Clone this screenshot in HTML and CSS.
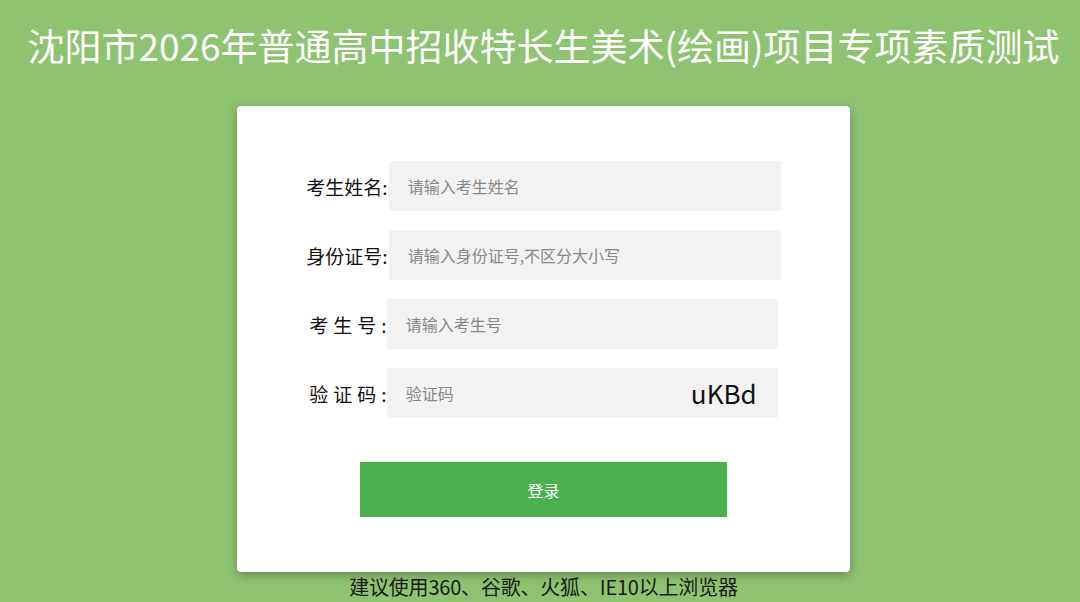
FILE: index.html
```html
<!DOCTYPE html>
<html lang="zh-CN">
<head>
    <meta charset="UTF-8">
    <meta name="viewport" content="width=device-width, initial-scale=1.0">
    <title>沈阳市2026年普通高中招收特长生美术(绘画)项目专项素质测试</title>
    <link rel="stylesheet" href="styles.css">
</head>

<body>
    <div class = 'page'>
        <h1 class = 'title'>沈阳市2026年普通高中招收特长生美术(绘画)项目专项素质测试</h1>

        <div class = 'login_box'>
            <form class = 'login_form' action = '#' method = 'POST'>
                <div class = 'form_row'>
                    <label class = 'row_label' for = 'name'>考生姓名:</label>
                    <input type = 'text' id = 'name' class = 'row_input' placeholder = '请输入考生姓名'>
                </div>
                <div class = 'form_row'>
                    <label class = 'row_label' for = 'idcard'>身份证号:</label>
                    <input type = 'text' id = 'idcard' class = 'row_input' placeholder = '请输入身份证号,不区分大小写'>
                </div>
                <div class = 'form_row'>
                    <label class = 'row_label spaced' for = 'examno'>考生号:</label>
                    <input type = 'text' id = 'examno' class = 'row_input narrow' placeholder = '请输入考生号'>
                </div>
                <div class = 'form_row'>
                    <label class = 'row_label spaced' for = 'code'>验证码:</label>
                    <div class = 'code_box narrow'>
                        <input type = 'text' id = 'code' class = 'code_input' placeholder = '验证码'>
                        <span class = 'code_text'>uKBd</span>
                    </div>
                </div>
                <button type = 'button' class = 'login_button'>登录</button>
            </form>
        </div>

        <p class = 'tips'>建议使用360、谷歌、火狐、IE10以上浏览器</p>
    </div>
</body>
</html>
```

FILE: styles.css
```css
body{
    margin: 0;
    width: 100vw;
    height: 100vh;
    overflow: hidden;
    background-color: rgb(142, 195, 113);
    font-family: "Noto Sans CJK SC", "Noto Sans", sans-serif;
}

.page{
    display: flex;
    flex-direction: column;
    align-items: center;
    padding-left: 7px;
}

.title{
    margin: 0;
    height: 106px;
    padding-top: 20px;
    box-sizing: border-box;
    font-size: 37px;
    font-weight: normal;
    line-height: 50px;
    color: #fff;
    white-space: nowrap;
}

.login_box{
    width: 613px;
    height: 466px;
    box-sizing: border-box;
    padding-top: 55px;
    background-color: #fff;
    border-radius: 4px;
    box-shadow: 0 3px 10px rgba(0, 0, 0, 0.3);
}

.login_form{
    display: flex;
    flex-direction: column;
    align-items: center;
    gap: 19px;
}

.form_row{
    display: flex;
    align-items: center;
    justify-content: center;
}

.row_label{
    font-size: 19px;
    color: #111;
    white-space: nowrap;
    margin-right: 1px;
}

.row_label.spaced{
    letter-spacing: 5px;
    margin-right: -5px;
}

.row_input, .code_box{
    width: 392px;
    height: 50px;
    box-sizing: border-box;
    border: 0;
    border-radius: 2px;
    padding: 0 19px;
    background-color: #f2f2f2;
    font-family: "Noto Sans CJK SC", "Noto Sans", sans-serif;
    font-size: 16px;
    color: #333;
    outline: none;
}

.narrow{
    width: 391px;
}

.row_input::placeholder, .code_input::placeholder{
    color: #888;
}

.code_box{
    display: flex;
    align-items: center;
    justify-content: space-between;
    padding-right: 21px;
}

.code_input{
    border: 0;
    width: 200px;
    padding: 0;
    background: transparent;
    font-family: "Noto Sans CJK SC", "Noto Sans", sans-serif;
    font-size: 16px;
    outline: none;
}

.code_text{
    font-family: "Noto Sans CJK SC", "Noto Sans", sans-serif;
    font-size: 26px;
    line-height: 40px;
    color: #111;
}

.login_button{
    margin-top: 25px;
    width: 367px;
    height: 55px;
    border: 0;
    background-color: #4caf50;
    color: #fff;
    font-family: "Noto Sans CJK SC", "Noto Sans", sans-serif;
    font-size: 16px;
    cursor: pointer;
}

.tips{
    margin: 0;
    font-size: 20px;
    line-height: 30px;
    letter-spacing: -0.2px;
    color: #1a1a1a;
}
```
